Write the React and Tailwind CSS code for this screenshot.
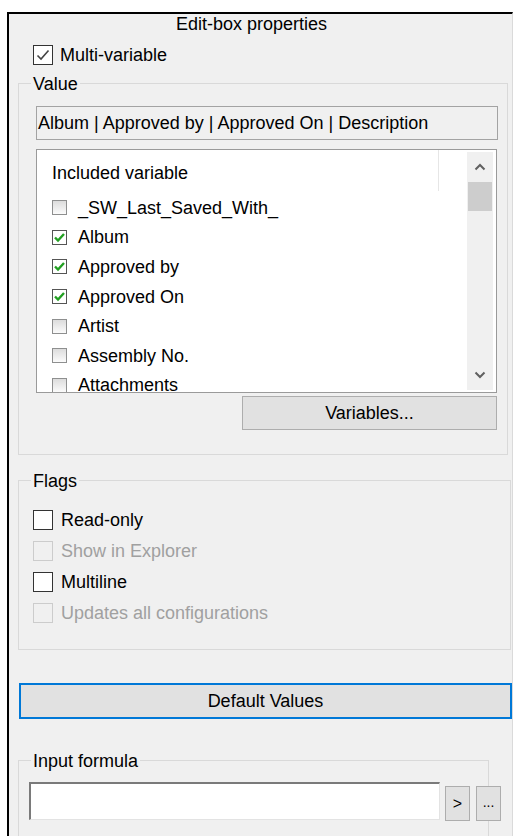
import React from "react";

// Windows-style 20px checkbox used for the dialog flags
function BoxCheck({ checked, disabled }) {
  return (
    <span
      className={`flex h-[20px] w-[20px] shrink-0 items-center justify-center border ${
        disabled ? "border-[#cccccc] bg-[#f0f0f0]" : "border-[#333333] bg-white"
      }`}
    >
      {checked && (
        <svg width="16" height="16" viewBox="0 0 16 16">
          <polyline points="2.5,8.5 6,12 13.5,3.5" fill="none" stroke="#444" strokeWidth="1.6" />
        </svg>
      )}
    </span>
  );
}

// small list checkbox with the green tick
function ListCheck({ checked }) {
  return (
    <span
      className={`flex h-[15px] w-[15px] shrink-0 items-center justify-center border ${
        checked ? "border-[#555] bg-white" : "border-[#8e8f8f] bg-gradient-to-b from-[#dcdcdc] to-[#fbfbfb]"
      }`}
    >
      {checked && (
        <svg width="13" height="13" viewBox="0 0 13 13">
          <polyline points="2,6.5 5,9.5 11,3" fill="none" stroke="#22a022" strokeWidth="2.4" />
        </svg>
      )}
    </span>
  );
}

function Group({ label, className, children }) {
  return (
    <div className={`border border-[#d9d9d9] ${className}`}>
      <div className="-mt-[10px] ml-[12px] w-fit bg-[#f0f0f0] px-[2px] leading-[20px]">{label}</div>
      {children}
    </div>
  );
}

const variables = [
  { name: "_SW_Last_Saved_With_", on: false },
  { name: "Album", on: true },
  { name: "Approved by", on: true },
  { name: "Approved On", on: true },
  { name: "Artist", on: false },
  { name: "Assembly No.", on: false },
  { name: "Attachments", on: false },
];

const flags = [
  { name: "Read-only", disabled: false },
  { name: "Show in Explorer", disabled: true },
  { name: "Multiline", disabled: false },
  { name: "Updates all configurations", disabled: true },
];

export default function App() {
  return (
    <div className="h-[836px] w-[513px] overflow-hidden bg-white pl-[7px] pt-[12px] font-['Liberation_Sans',Arial,sans-serif] text-[18px] leading-[20px] text-black">
      <div className="flex h-[824px] flex-col overflow-hidden border-l-2 border-t-2 border-r border-black border-r-[#dadada] bg-[#f0f0f0]">
        <div className="flex h-[25px] items-end justify-center pr-[18px]">Edit-box properties</div>

        <div className="ml-[24px] mt-[11px] flex h-[20px] items-center gap-[7px]">
          <BoxCheck checked />
          <span>Multi-variable</span>
        </div>

        <Group label="Value" className="ml-[9px] mt-[18px] w-[490px]">
          <div className="flex flex-col pb-[24px] pl-[17px] pr-[9px]">
            <div className="mt-[12px] flex h-[34px] items-center border border-[#a3a3a3] pl-[1px] whitespace-nowrap">
              Album | Approved by | Approved On | Description
            </div>

            <div className="mt-[9px] flex h-[244px] w-[461px] border border-[#9a9a9a] bg-white">
              <div className="flex-1 overflow-hidden">
                <div className="flex h-[43px]">
                  <div className="h-[41px] w-[402px] border-r border-[#e6e6e6] pl-[15px] pt-[13px]">Included variable</div>
                </div>
                {variables.map((v) => (
                  <div key={v.name} className="flex h-[29.6px] items-center gap-[11px] pl-[15px]">
                    <ListCheck checked={v.on} />
                    <span>{v.name}</span>
                  </div>
                ))}
              </div>
              <div className="my-[2px] mr-[3px] flex w-[26px] flex-col bg-[#f0f0f0]">
                <div className="flex h-[30px] items-center justify-center">
                  <svg width="12" height="8" viewBox="0 0 12 8">
                    <polyline points="1.5,6.5 6,2 10.5,6.5" fill="none" stroke="#606060" strokeWidth="2" />
                  </svg>
                </div>
                <div className="mx-[1px] h-[29px] bg-[#cdcdcd]" />
                <div className="flex-1" />
                <div className="flex h-[30px] items-center justify-center">
                  <svg width="12" height="8" viewBox="0 0 12 8">
                    <polyline points="1.5,1.5 6,6 10.5,1.5" fill="none" stroke="#606060" strokeWidth="2" />
                  </svg>
                </div>
              </div>
            </div>

            <button className="mr-[1px] mt-[3px] flex h-[34px] w-[255px] items-center justify-center self-end border border-[#adadad] bg-[#e1e1e1]">
              Variables...
            </button>
          </div>
        </Group>

        <Group label="Flags" className="ml-[9px] mt-[25px] w-[493px]">
          <div className="flex flex-col pb-[21px] pl-[14px] pt-[13px]">
            {flags.map((f) => (
              <div key={f.name} className="flex h-[31px] items-center gap-[8px]">
                <BoxCheck disabled={f.disabled} />
                <span className={f.disabled ? "text-[#a0a0a0]" : ""}>{f.name}</span>
              </div>
            ))}
          </div>
        </Group>

        <button className="ml-[10px] mt-[33px] flex h-[36px] w-[493px] shrink-0 items-center justify-center border-2 border-[#0078d7] bg-[#e1e1e1]">
          Default Values
        </button>

        <Group label="Input formula" className="ml-[9px] mt-[41px] w-[471px] shrink-0">
          <div className="flex items-start pb-[30px] pl-[10px] pt-[11px]">
            <div className="h-[38px] w-[411px] shrink-0 border-b border-l-2 border-r border-t-2 border-b-[#e3e3e3] border-l-[#7a7a7a] border-r-[#e3e3e3] border-t-[#7a7a7a] bg-white" />
            <button className="ml-[5px] mt-[4px] flex h-[35px] w-[25px] shrink-0 items-center justify-center border border-[#adadad] bg-[#e1e1e1] text-[16px]">
              &gt;
            </button>
            <button className="ml-[6px] mt-[4px] flex h-[35px] w-[25px] shrink-0 items-end justify-center border border-[#adadad] bg-[#e1e1e1] pb-[8px] text-[14px]">
              ...
            </button>
          </div>
        </Group>
      </div>
    </div>
  );
}
